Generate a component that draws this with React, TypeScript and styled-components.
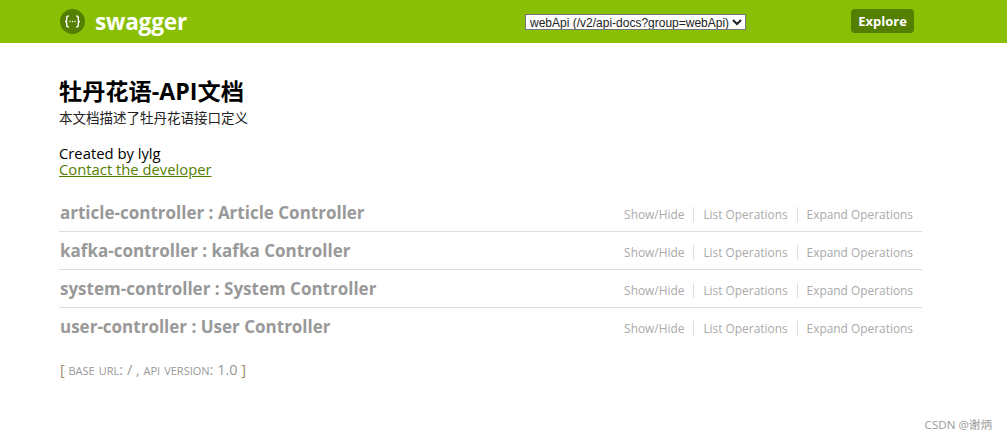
import React from "react";
import styled, { createGlobalStyle } from "styled-components";

const GlobalStyle = createGlobalStyle`
  html, body {
    margin: 0;
    padding: 0;
    background: #fff;
  }
  body {
    font-family: "Open Sans", "Noto Sans CJK SC", sans-serif;
  }
`;

const Page = styled.div`
  position: relative;
  width: 1007px;
  height: 440px;
  overflow: hidden;
`;

const Header = styled.header`
  height: 43px;
  background: #89bf04;
  display: flex;
  align-items: center;
  padding: 0 93px 0 60px;
`;

const Logo = styled.a`
  display: flex;
  align-items: center;
  gap: 10px;
  color: #fff;
  font-size: 22.6px;
  font-weight: 700;
  letter-spacing: -0.2px;
`;

const Specs = styled.select`
  margin-left: auto;
  width: 221px;
  height: 16px;
  padding: 0;
  font-family: "Liberation Sans", sans-serif;
  font-size: 12px;
  background: #fff;
  color: #222;
  border: 1px solid #767676;
  border-radius: 0;
`;

const Explore = styled.button`
  margin: 0 0 2px 105px;
  width: 63px;
  height: 24px;
  padding: 0;
  border: none;
  border-radius: 4px;
  background: #547f00;
  color: #fff;
  font-family: "Open Sans", sans-serif;
  font-size: 13px;
  font-weight: 700;
`;

const Content = styled.main`
  padding: 33px 85px 0 59px;
`;

const Title = styled.h1`
  margin: 0;
  font-size: 23.2px;
  line-height: 30px;
  font-weight: 700;
  color: #000;
  font-family: "Open Sans", "Noto Sans CJK SC", sans-serif;
`;

const Description = styled.p`
  margin: 3px 0 0;
  font-size: 13.5px;
  line-height: 18px;
  color: #222;
`;

const Contact = styled.div`
  margin-top: 18px;
  font-size: 14.8px;
  line-height: 16px;
  color: #000;
`;

const DevLink = styled.a`
  display: block;
  color: #547f00;
  text-decoration: underline;
`;

const Resources = styled.ul`
  list-style: none;
  margin: 17px 0 0;
  padding: 0;
`;

const Resource = styled.li`
  display: flex;
  align-items: center;
  justify-content: space-between;
  height: 37px;
  padding: 0 9px 0 1px;
  border-bottom: 1px solid #ddd;

  &:last-child {
    border-bottom: none;
  }
`;

const ResourceName = styled.h2`
  margin: 0;
  font-size: 17px;
  font-weight: 700;
  color: #999;
`;

const Ops = styled.div`
  display: flex;
  align-items: center;
  padding-top: 4px;
`;

const Op = styled.a`
  font-size: 11.9px;
  line-height: 15px;
  color: #aaa;
  padding: 0 9px;
  border-right: 1px solid #ddd;

  &:last-child {
    border-right: none;
    padding-right: 0;
  }
`;

const BaseInfo = styled.p`
  margin: 14px 0 0 1px;
  font-size: 14.5px;
  line-height: 20px;
  color: #999;
`;

const Bracket = styled.span`
  color: #a08a70;
`;

const Small = styled.span`
  font-variant: small-caps;
  font-size: 15.5px;
  color: #999;
`;

const Watermark = styled.div`
  position: absolute;
  right: 15px;
  bottom: 8px;
  font-size: 11.6px;
  line-height: 14px;
  color: #999;
`;

const SwaggerMark = () => (
  <svg width="25" height="25" viewBox="0 0 25 25">
    <circle cx="12.5" cy="12.5" r="12.5" fill="#547f00" />
    <path
      d="M8.8 7c-1.6 0-2.1.7-2.1 1.9v2c0 1-.5 1.6-1.5 1.6 1 0 1.5.6 1.5 1.6v2c0 1.2.5 1.9 2.1 1.9M16.2 7c1.6 0 2.1.7 2.1 1.9v2c0 1 .5 1.6 1.5 1.6-1 0-1.5.6-1.5 1.6v2c0 1.2-.5 1.9-2.1 1.9"
      fill="none"
      stroke="#fff"
      strokeWidth="1.4"
    />
    <circle cx="10" cy="12.5" r=".75" fill="#fff" />
    <circle cx="12.5" cy="12.5" r=".75" fill="#fff" />
    <circle cx="15" cy="12.5" r=".75" fill="#fff" />
  </svg>
);

const controllers = [
  "article-controller : Article Controller",
  "kafka-controller : kafka Controller",
  "system-controller : System Controller",
  "user-controller : User Controller",
];

export default function App() {
  return (
    <Page>
      <GlobalStyle />
      <Header>
        <Logo>
          <SwaggerMark />
          swagger
        </Logo>
        <Specs defaultValue="webApi">
          <option value="webApi">webApi (/v2/api-docs?group=webApi)</option>
        </Specs>
        <Explore>Explore</Explore>
      </Header>
      <Content>
        <Title>牡丹花语-API文档</Title>
        <Description>本文档描述了牡丹花语接口定义</Description>
        <Contact>
          Created by lylg
          <DevLink>Contact the developer</DevLink>
        </Contact>
        <Resources>
          {controllers.map((name) => (
            <Resource key={name}>
              <ResourceName>{name}</ResourceName>
              <Ops>
                <Op>Show/Hide</Op>
                <Op>List Operations</Op>
                <Op>Expand Operations</Op>
              </Ops>
            </Resource>
          ))}
        </Resources>
        <BaseInfo>
          <Bracket>[ </Bracket>
          <Small>base url</Small>: / , <Small>api version</Small>: 1.0
          <Bracket> ]</Bracket>
        </BaseInfo>
      </Content>
      <Watermark>CSDN @谢炳</Watermark>
    </Page>
  );
}
